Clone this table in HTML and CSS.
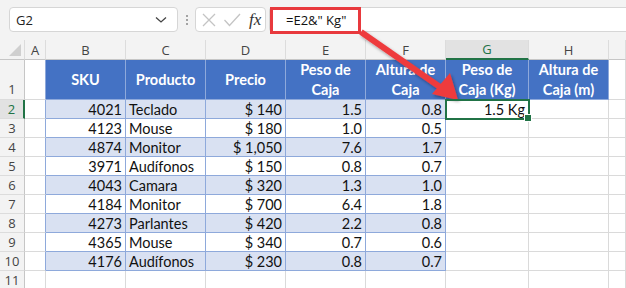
FILE: index.html
```html
<!DOCTYPE html>
<html>
<head>
<meta charset="utf-8">
<link rel="stylesheet" href="styles.css">
</head>
<body>
<div class="app">
  <div class="toolbar">
    <div class="namebox"><span class="nb-text">G2</span>
      <svg class="chev" width="12" height="8" viewBox="0 0 12 8"><path d="M1 1.5 L6 6 L11 1.5" fill="none" stroke="#444" stroke-width="1.3"/></svg>
    </div>
    <div class="dots"><span></span><span></span><span></span></div>
    <div class="fxbox">
      <svg width="16" height="16" viewBox="0 0 16 16"><path d="M2 2 L14 14 M14 2 L2 14" stroke="#c4c4c4" stroke-width="1.3" fill="none"/></svg>
      <svg width="18" height="16" viewBox="0 0 18 16"><path d="M1.5 8 L6.5 13.5 L17 2" stroke="#c4c4c4" stroke-width="1.3" fill="none"/></svg>
      <span class="fx">fx</span>
    </div>
    <div class="formula"><span class="ftext">=E2&amp;" Kg"</span></div>
  </div>
  <div class="sheet">
    <div class="ch corner"><span class="tri"></span></div>
    <div class="ch">A</div><div class="ch">B</div><div class="ch">C</div><div class="ch">D</div><div class="ch">E</div><div class="ch">F</div><div class="ch sel">G</div><div class="ch">H</div><div class="ch"></div>

    <div class="rh bottom">1</div>
    <div class="c tl"></div>
    <div class="th">SKU</div><div class="th">Producto</div><div class="th">Precio</div><div class="th">Peso de<br>Caja</div><div class="th">Altura de<br>Caja</div><div class="th">Peso de<br>Caja (Kg)</div><div class="th">Altura de<br>Caja (m)</div>
    <div class="c"></div>

    <div class="rh rsel">2</div><div class="c tl"></div>
    <div class="td b r">4021</div><div class="td b">Teclado</div><div class="td b r">$ 140</div><div class="td b r">1.5</div><div class="td b r">0.8</div>
    <div class="c r active">1.5 Kg<span class="handle"></span></div><div class="c"></div><div class="c"></div>

    <div class="rh">3</div><div class="c tl"></div>
    <div class="td r">4123</div><div class="td">Mouse</div><div class="td r">$ 180</div><div class="td r">1.0</div><div class="td r">0.5</div>
    <div class="c"></div><div class="c"></div><div class="c"></div>

    <div class="rh">4</div><div class="c tl"></div>
    <div class="td b r">4874</div><div class="td b">Monitor</div><div class="td b r">$ 1,050</div><div class="td b r">7.6</div><div class="td b r">1.7</div>
    <div class="c"></div><div class="c"></div><div class="c"></div>

    <div class="rh">5</div><div class="c tl"></div>
    <div class="td r">3971</div><div class="td">Audífonos</div><div class="td r">$ 150</div><div class="td r">0.8</div><div class="td r">0.7</div>
    <div class="c"></div><div class="c"></div><div class="c"></div>

    <div class="rh">6</div><div class="c tl"></div>
    <div class="td b r">4043</div><div class="td b">Camara</div><div class="td b r">$ 320</div><div class="td b r">1.3</div><div class="td b r">1.0</div>
    <div class="c"></div><div class="c"></div><div class="c"></div>

    <div class="rh">7</div><div class="c tl"></div>
    <div class="td r">4184</div><div class="td">Monitor</div><div class="td r">$ 700</div><div class="td r">6.4</div><div class="td r">1.8</div>
    <div class="c"></div><div class="c"></div><div class="c"></div>

    <div class="rh">8</div><div class="c tl"></div>
    <div class="td b r">4273</div><div class="td b">Parlantes</div><div class="td b r">$ 420</div><div class="td b r">2.2</div><div class="td b r">0.8</div>
    <div class="c"></div><div class="c"></div><div class="c"></div>

    <div class="rh">9</div><div class="c tl"></div>
    <div class="td r">4365</div><div class="td">Mouse</div><div class="td r">$ 340</div><div class="td r">0.7</div><div class="td r">0.6</div>
    <div class="c"></div><div class="c"></div><div class="c"></div>

    <div class="rh">10</div><div class="c tl"></div>
    <div class="td b r">4176</div><div class="td b">Audífonos</div><div class="td b r">$ 230</div><div class="td b r">0.8</div><div class="td b r">0.7</div>
    <div class="c"></div><div class="c"></div><div class="c"></div>

    <div class="rh">11</div><div class="c"></div>
    <div class="c"></div><div class="c"></div><div class="c"></div><div class="c"></div><div class="c"></div>
    <div class="c"></div><div class="c"></div><div class="c"></div>
  </div>
  <div class="callout"></div>
  <svg class="arrow" width="626" height="288" viewBox="0 0 626 288">
    <defs>
      <filter id="sh" x="-20%" y="-20%" width="140%" height="140%">
        <feDropShadow dx="1.5" dy="2" stdDeviation="1.5" flood-color="#000" flood-opacity="0.35"/>
      </filter>
    </defs>
    <g filter="url(#sh)">
      <line x1="361" y1="32" x2="440" y2="87" stroke="#ee3b3e" stroke-width="6"/>
      <polygon points="458,100 432,94 450,73" fill="#ee3b3e"/>
    </g>
  </svg>
</div>
</body>
</html>
```
FILE: styles.css
```css
html, body {
  margin: 0;
  padding: 0;
  background: #ffffff;
}
.app {
  position: relative;
  width: 626px;
  height: 288px;
  overflow: hidden;
  font-family: "Lato", "Liberation Sans", sans-serif;
}
.toolbar {
  height: 40px;
  box-sizing: border-box;
  background: #f3f3f3;
  display: flex;
  align-items: flex-start;
  padding: 7px 0 0 9px;
}
.namebox {
  width: 169px;
  height: 25px;
  box-sizing: border-box;
  background: #fff;
  border: 1px solid #d6d6d6;
  border-radius: 4px;
  display: flex;
  align-items: center;
  justify-content: space-between;
  padding: 0 10px 0 6px;
  font-family: "Open Sans", sans-serif;
  font-size: 13px;
  color: #222;
}
.dots {
  width: 17px;
  height: 25px;
  display: flex;
  flex-direction: column;
  align-items: center;
  justify-content: center;
  gap: 2px;
}
.dots span {
  width: 2px;
  height: 2px;
  background: #888;
  border-radius: 1px;
}
.fxbox {
  width: 71px;
  height: 25px;
  box-sizing: border-box;
  background: #fff;
  border: 1px solid #d6d6d6;
  border-radius: 4px;
  display: flex;
  align-items: center;
  gap: 6px;
  padding: 0 0 0 5px;
}
.fx {
  font-family: "Liberation Serif", serif;
  font-style: italic;
  font-size: 17px;
  color: #333;
  margin-left: 2px;
}
.formula {
  flex: 1;
  height: 25px;
  margin-left: 3px;
  box-sizing: border-box;
  background: #fff;
  border: 1px solid #d6d6d6;
  border-right: none;
  border-radius: 4px 0 0 4px;
  display: flex;
  align-items: center;
  padding-left: 16px;
  font-family: "Open Sans", sans-serif;
  font-size: 13px;
  color: #111;
}
.sheet {
  display: grid;
  grid-template-columns: 25px 21px 80px 80px 80px 80px 80px 83px 80px 1fr;
  grid-template-rows: 20px 40px repeat(10, 19px) 19px;
  font-size: 14.5px;
  color: #111;
}
.sheet > div {
  box-sizing: border-box;
  border-right: 1px solid #dadada;
  border-bottom: 1px solid #dadada;
  display: flex;
  align-items: center;
  overflow: hidden;
  white-space: nowrap;
  position: relative;
}
.sheet > .ch {
  background: #f3f3f3;
  justify-content: center;
  font-family: "Open Sans", sans-serif;
  font-size: 13px;
  color: #444;
  border-right: 1px solid #dcdcdc;
  border-bottom: 1px solid #c6c6c6;
}
.sheet > .ch.sel {
  background: #e2e2e2;
  color: #217346;
  border-bottom: 2px solid #217346;
}
.corner .tri {
  position: absolute;
  right: 3px;
  bottom: 3px;
  width: 0;
  height: 0;
  border-left: 12px solid transparent;
  border-bottom: 12px solid #cfcfcf;
}
.sheet > .rh {
  background: #f3f3f3;
  justify-content: center;
  font-family: "Open Sans", sans-serif;
  font-size: 13px;
  color: #444;
  border-right: 1px solid #c6c6c6;
  border-bottom: 1px solid #dcdcdc;
}
.sheet > .rh.bottom {
  align-items: flex-end;
  padding-bottom: 1px;
}
.sheet > .rh.rsel {
  background: #e2e2e2;
  color: #217346;
  border-right: 2px solid #217346;
}
.sheet > .c.tl {
  border-right-color: #8ea9db;
}
.sheet > .th {
  background: #4472c4;
  color: #fff;
  font-weight: 700;
  justify-content: center;
  text-align: center;
  line-height: 20px;
  border-right: 1px solid #8ea9db;
  border-bottom: 1px solid #8ea9db;
}
.sheet > .td {
  background: #fff;
  border-right: 1px solid #8ea9db;
  border-bottom: 1px solid #8ea9db;
  padding: 0 3px;
}
.sheet > .td.b {
  background: #d9e1f2;
}
.sheet > .r {
  justify-content: flex-end;
  padding: 0 3px;
}
.sheet > .active {
  overflow: visible;
  z-index: 2;
  outline: 2px solid #217346;
  outline-offset: -1px;
}
.handle {
  position: absolute;
  right: -4px;
  bottom: -4px;
  width: 6px;
  height: 6px;
  background: #217346;
  border: 1px solid #fff;
}
.callout {
  position: absolute;
  left: 270px;
  top: 7px;
  width: 91px;
  height: 27px;
  box-sizing: border-box;
  border: 3px solid #e8393d;
}
.arrow {
  position: absolute;
  left: 0;
  top: 0;
  pointer-events: none;
}
```
